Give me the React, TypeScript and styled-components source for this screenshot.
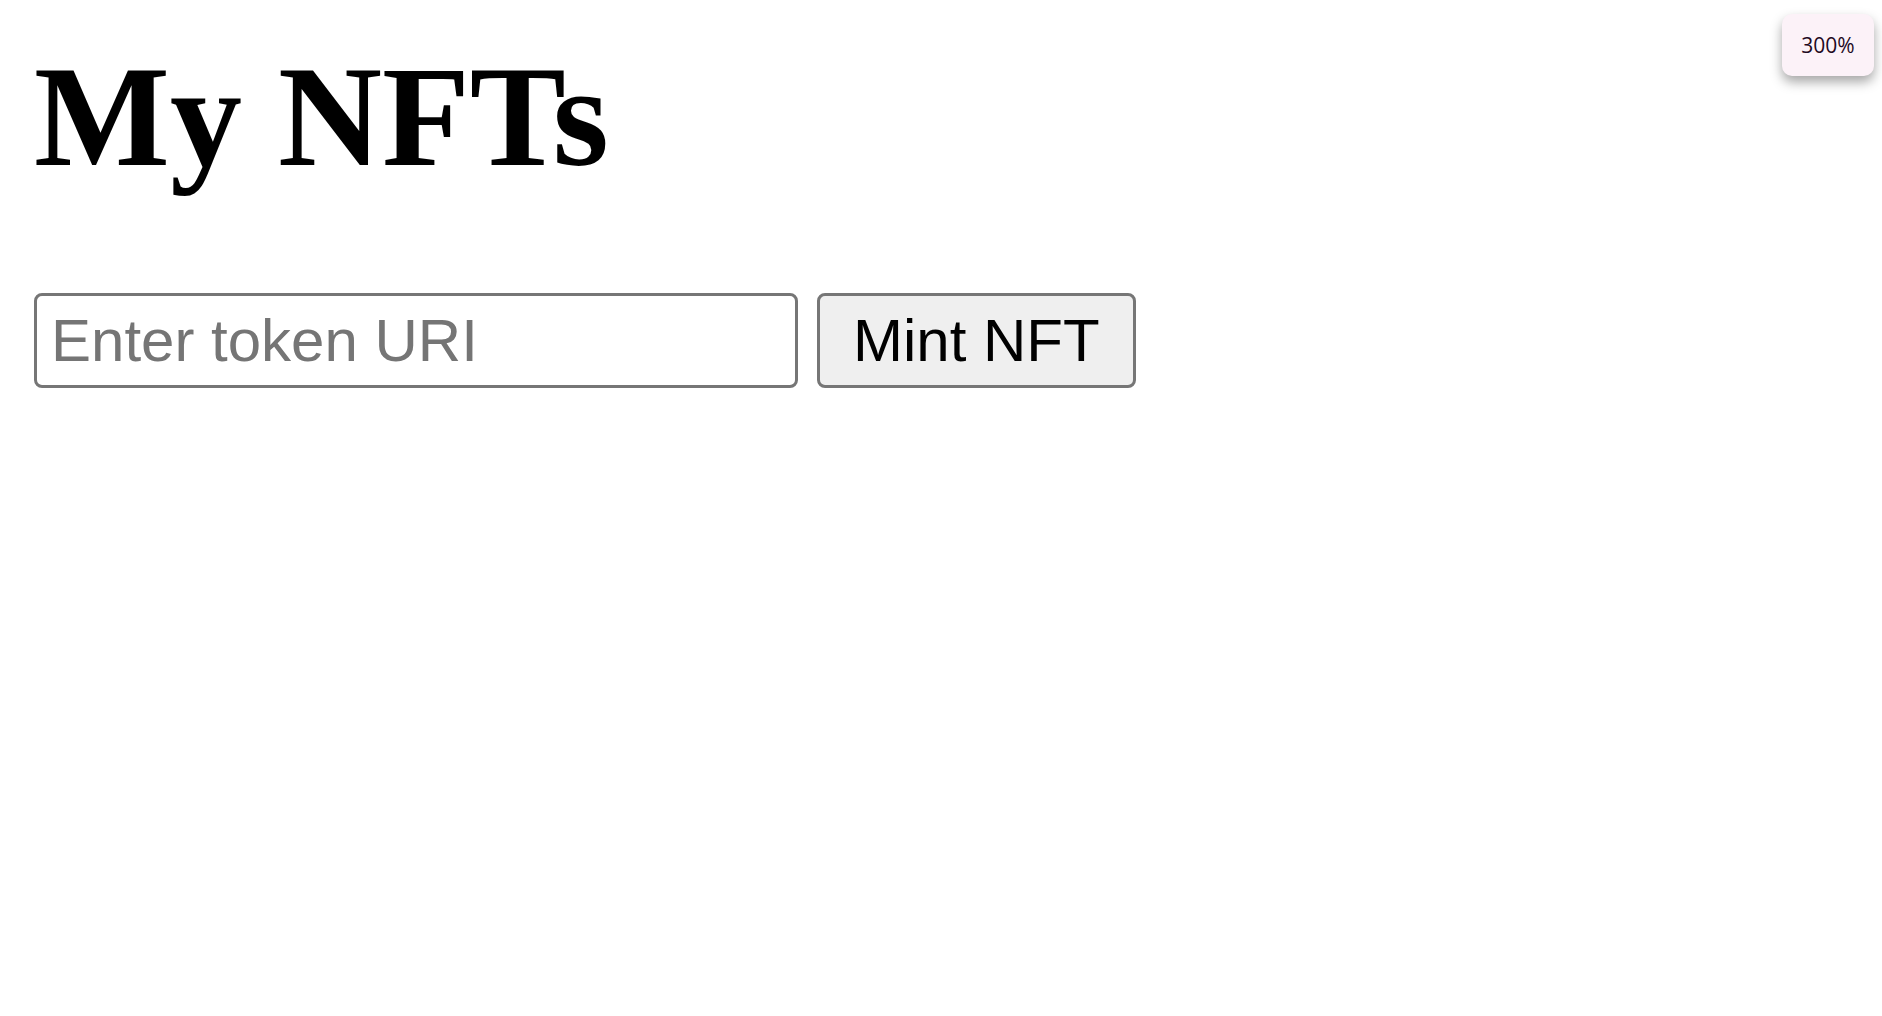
import React from "react";
import styled, { createGlobalStyle } from "styled-components";

const GlobalStyle = createGlobalStyle`
  html, body {
    margin: 0;
    padding: 0;
    background: #ffffff;
  }
  body {
    font-family: "Liberation Serif", "Times New Roman", serif;
  }
`;

const Page = styled.div`
  position: relative;
  min-height: 1016px;
  padding: 37px 0 0 34px;
  box-sizing: border-box;
`;

const Title = styled.h1`
  margin: 0;
  font-family: "Liberation Serif", "Times New Roman", serif;
  font-weight: 700;
  font-size: 144px;
  line-height: 159px;
  color: #000;
`;

const Form = styled.div`
  display: flex;
  align-items: stretch;
  gap: 19px;
  margin-top: 97px;
`;

const TokenInput = styled.input`
  box-sizing: border-box;
  width: 764px;
  height: 95px;
  padding: 0 14px;
  border: 3px solid #767676;
  border-radius: 8px;
  background: #fff;
  font-family: "Liberation Sans", Arial, sans-serif;
  font-size: 60px;
  color: #000;
  outline: none;
  &::placeholder {
    color: #757575;
  }
`;

const MintButton = styled.button`
  box-sizing: border-box;
  height: 95px;
  padding: 0 33px;
  border: 3px solid #767676;
  border-radius: 8px;
  background: #efefef;
  font-family: "Liberation Sans", Arial, sans-serif;
  font-size: 60px;
  color: #000;
  cursor: pointer;
`;

const ZoomBadge = styled.div`
  position: absolute;
  top: 14px;
  right: 8px;
  width: 92px;
  height: 62px;
  display: flex;
  align-items: center;
  justify-content: center;
  background: #fcf2f8;
  border-radius: 10px;
  box-shadow: 0 6px 12px rgba(0, 0, 0, 0.35);
  font-family: "Open Sans", "Noto Sans", sans-serif;
  font-size: 21px;
  font-weight: 500;
  color: #1f0a1f;
`;

export default function App() {
  return (
    <>
      <GlobalStyle />
      <Page>
        <Title>My NFTs</Title>
        <Form>
          <TokenInput type="text" placeholder="Enter token URI" />
          <MintButton type="button">Mint NFT</MintButton>
        </Form>
        <ZoomBadge>300%</ZoomBadge>
      </Page>
    </>
  );
}
